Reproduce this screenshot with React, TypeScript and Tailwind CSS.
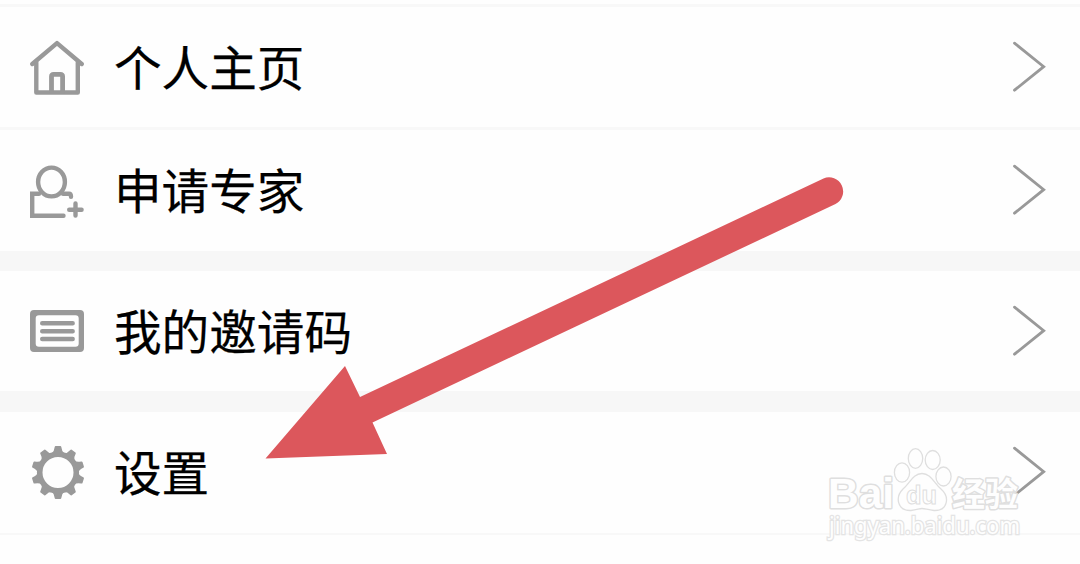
import type { ReactNode } from "react";

const TEETH = [0, 36, 72, 108, 144, 180, 216, 252, 288, 324];

function HomeIcon() {
    return (
        <svg viewBox="30 38.5 56 58" className="h-[58px] w-14" fill="none" stroke="#999" strokeWidth="4.4" strokeLinecap="round" strokeLinejoin="round">
            <path d="M32.3 63.5 L57 42.6 L81.7 63.5" />
            <path d="M36.3 62 V92 H77.8 V62" />
            <path d="M51.5 91 V76 Q51.5 73.8 53.7 73.8 H60.3 Q62.6 73.8 62.6 76 V91" strokeWidth="4.8" />
        </svg>
    );
}

function ExpertIcon() {
    return (
        <svg viewBox="30 161.5 56 58" className="h-[58px] w-14" fill="none" stroke="#999" strokeWidth="4.4">
            <ellipse cx="51.5" cy="181.5" rx="13.4" ry="14.4" />
            <path d="M39 193.2 H32.2 V215.2 H63.5" strokeLinecap="round" />
            <path d="M63 193.2 H69 Q71 193.2 71 196.3" strokeLinecap="round" />
            <path d="M69.2 209.3 H81.6 M75.5 203 V215" strokeWidth="4.4" strokeLinecap="round" />
        </svg>
    );
}

function CardIcon() {
    return (
        <svg viewBox="30 303 56 58" className="h-[58px] w-14" fill="none" stroke="#999">
            <path
                d="M34 310 H80 Q84 310 84 314 V348 Q84 352 80 352 H34 Q30 352 30 348 V314 Q30 310 34 310 Z M39 315.3 Q35.7 315.3 35.7 318.5 V343.5 Q35.7 346.7 39 346.7 H75.5 Q78.7 346.7 78.7 343.5 V318.5 Q78.7 315.3 75.5 315.3 Z"
                fill="#999"
                fillRule="evenodd"
                stroke="none"
            />
            <path d="M42.2 323.2 H72.7 M42.2 331.2 H72.7 M42.2 339 H72.7" strokeWidth="4.4" strokeLinecap="round" />
        </svg>
    );
}

function GearIcon() {
    return (
        <svg viewBox="30 444 56 58" className="h-[58px] w-14" fill="#999">
            <circle cx="58" cy="472.5" r="18.3" fill="none" stroke="#999" strokeWidth="5.6" />
            {TEETH.map((deg) => (
                <path
                    key={deg}
                    d="M51.5 453.5 Q54.3 451.5 54.7 447 Q54.8 446 55.7 446 H60.3 Q61.2 446 61.3 447 Q61.7 451.5 64.5 453.5 Z"
                    transform={`rotate(${deg} 58 472.5)`}
                />
            ))}
        </svg>
    );
}

function Chevron() {
    return (
        <svg viewBox="0 0 36 54" className="h-[54px] w-9" fill="none" stroke="#999" strokeWidth="2.8" strokeLinecap="round">
            <path d="M2.5 2.2 L31.7 25.7 L2.5 49.2" />
        </svg>
    );
}

function Row({ icon, label }: { icon: ReactNode; label: string }) {
    return (
        <div className="flex h-[121px] items-center bg-[#fefefe] pr-8 pl-[30px]">
            {icon}
            <span className="mb-[3px] ml-7 flex-1 text-[47.6px] leading-none whitespace-nowrap text-black [-webkit-text-stroke:0.25px_#000]">{label}</span>
            <Chevron />
        </div>
    );
}

function Arrow() {
    return (
        <svg viewBox="0 0 1080 564" className="pointer-events-none absolute inset-0 h-[564px] w-[1080px]">
            <path d="M265.5 458.5 L345 366 L360 397 L823.5 178.5 A14.1 14.1 0 0 1 835.5 204 L372.5 422.5 L387 454 Z" fill="#dc575c" />
        </svg>
    );
}

function Watermark() {
    return (
        <svg
            viewBox="820 440 210 105"
            className="pointer-events-none absolute top-[440px] left-[820px] h-[105px] w-[210px]"
            fill="#fefefe"
            stroke="#dfdfdf"
            strokeWidth="1.3"
            fontFamily="'Liberation Sans', 'Noto Sans CJK SC', sans-serif"
        >
            <g strokeWidth="3" strokeLinejoin="round" paintOrder="stroke" fontWeight="700">
                <text x="828" y="508" fontSize="43" textLength="66" lengthAdjust="spacingAndGlyphs">Bai</text>
                <text x="952" y="506" fontSize="33" textLength="66" lengthAdjust="spacingAndGlyphs" fontFamily="'Noto Sans CJK SC', sans-serif">经验</text>
            </g>
            <ellipse cx="902" cy="472.5" rx="7.6" ry="9.6" />
            <ellipse cx="915.5" cy="458.5" rx="7.2" ry="9.8" />
            <ellipse cx="932.7" cy="460" rx="7.5" ry="9.5" />
            <ellipse cx="943.5" cy="476.5" rx="7.6" ry="9.5" />
            <path d="M922 473.5 C931 473.5 934 483 941 489 C950 497 948 511 934 510.5 C928 510 925 508.5 922 508.5 C919 508.5 917 510 911 510.5 C897 511 895 497 903 489 C910 483 913 473.5 922 473.5 Z" />
            <text x="906" y="503.5" fontSize="26" fontWeight="700" textLength="31" lengthAdjust="spacingAndGlyphs" strokeWidth="1">du</text>
            <text x="829" y="533.5" fontSize="23" textLength="191" lengthAdjust="spacingAndGlyphs" fontFamily="'Noto Sans', sans-serif" strokeWidth="2.6" stroke="#e4e4e4" paintOrder="stroke">jingyan.baidu.com</text>
        </svg>
    );
}

export default function App() {
    return (
        <main className="relative h-[564px] w-[1080px] overflow-hidden bg-[#fefefe] font-['Noto_Sans_CJK_SC',sans-serif]">
            <div className="mt-1 h-[3px] bg-[#f8f8f8]" />
            <Row icon={<HomeIcon />} label="个人主页" />
            <div className="-mt-px h-[3px] bg-[#f8f8f8]" />
            <Row icon={<ExpertIcon />} label="申请专家" />
            <div className="h-5 bg-[#f7f7f7]" />
            <Row icon={<CardIcon />} label="我的邀请码" />
            <div className="-mt-px h-[21px] bg-[#f7f7f7]" />
            <Row icon={<GearIcon />} label="设置" />
            <div className="h-[2px] bg-[#f8f8f8]" />
            <Arrow />
            <Watermark />
        </main>
    );
}
